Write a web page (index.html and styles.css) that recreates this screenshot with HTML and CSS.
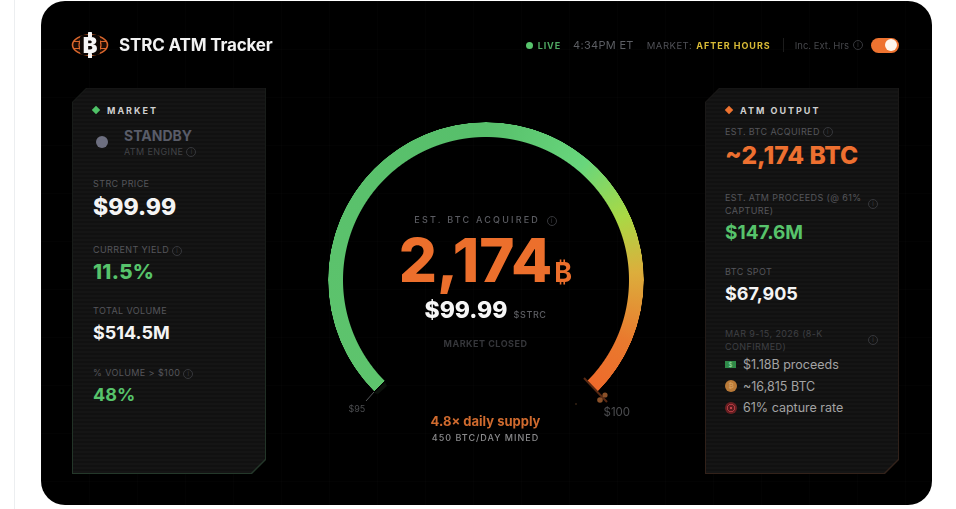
FILE: index.html
```html
<!DOCTYPE html>
<html lang="en">
<head>
    <meta charset="UTF-8">
    <title>STRC ATM Tracker</title>
    <link rel="stylesheet" href="styles.css">
</head>
<body>
    <div class="page">
        <div class="card">
            <header class="topbar">
                <div class="brand">
                    <svg class="logo" width="38" height="26" viewBox="0 0 38 26">
                        <ellipse cx="19" cy="13" rx="17.5" ry="10" fill="#1e0c05" stroke="#d9662c" stroke-width="1.6"/>
                        <ellipse cx="19" cy="13" rx="11" ry="10" fill="none" stroke="#d9662c" stroke-width="1.2"/>
                        <path d="M2 9.5H36M2 16.5H36" stroke="#d9662c" stroke-width="1.1"/>
                        <rect x="9" y="3" width="20" height="20" rx="3" fill="#0c0603"/>
                        <rect x="17" y="0" width="4" height="5" rx="0.6" fill="#f4f4f4"/>
                        <rect x="17" y="21" width="4" height="5" rx="0.6" fill="#f4f4f4"/>
                        <text x="19" y="21" text-anchor="middle" class="logo-b">B</text>
                    </svg>
                    <span class="title">STRC ATM Tracker</span>
                </div>
                <div class="status">
                    <span class="live-dot"></span>
                    <span class="live">LIVE</span>
                    <span class="clock">4:34PM ET</span>
                    <span class="market">MARKET:</span>
                    <span class="session">AFTER HOURS</span>
                    <span class="divider"></span>
                    <span class="ext">Inc. Ext. Hrs</span>
                    <span class="info info-ext">i</span>
                    <span class="toggle"><span class="knob"></span></span>
                </div>
            </header>

            <main class="board">
                <section class="panel panel-green">
                    <div class="panel-inner">
                        <h3 class="panel-head"><span class="diamond diamond-green"></span>MARKET</h3>
                        <div class="engine">
                            <span class="engine-dot"></span>
                            <div>
                                <div class="engine-state">STANDBY</div>
                                <div class="label label-engine">ATM ENGINE <span class="info">i</span></div>
                            </div>
                        </div>
                        <div class="stat stat-price">
                            <div class="label">STRC PRICE</div>
                            <div class="value value-lg">$99.99</div>
                        </div>
                        <div class="stat">
                            <div class="label">CURRENT YIELD <span class="info">i</span></div>
                            <div class="value value-md green">11.5%</div>
                        </div>
                        <div class="stat">
                            <div class="label">TOTAL VOLUME</div>
                            <div class="value">$514.5M</div>
                        </div>
                        <div class="stat stat-last">
                            <div class="label">% VOLUME &gt; $100 <span class="info">i</span></div>
                            <div class="value green">48%</div>
                        </div>
                    </div>
                </section>

                <section class="center">
                    <div class="gauge">
                        <div class="ring"></div>
                        <svg class="ticks" width="316" height="316" viewBox="0 0 316 316">
                            <path d="M46 270 L38 279" stroke="#55585a" stroke-width="1"/>
                            <path d="M57 260 L59 264 L50 272 L46 271 Z" fill="#0c110c"/>
                            <path d="M256 256 L279 280" stroke="#5a2a14" stroke-width="2"/>
                            <circle cx="277" cy="273" r="2.6" fill="#8a5028"/>
                            <circle cx="272" cy="278" r="2.8" fill="#8a5028"/>
                            <circle cx="248" cy="282" r="0.8" fill="#5a3a20"/>
                        </svg>
                        <span class="end-label end-low">$95</span>
                        <span class="end-label end-high">$100</span>
                        <div class="readout">
                            <div class="readout-label">EST. BTC ACQUIRED <span class="info">i</span></div>
                            <div class="readout-value">2,174<span class="btc">₿</span></div>
                            <div class="readout-price">$99.99 <span class="ticker">$STRC</span></div>
                            <div class="readout-state">MARKET CLOSED</div>
                        </div>
                    </div>
                    <div class="supply">4.8× daily supply</div>
                    <div class="mined">450 BTC/DAY MINED</div>
                </section>

                <section class="panel panel-orange">
                    <div class="panel-inner panel-inner-right">
                        <h3 class="panel-head"><span class="diamond diamond-orange"></span>ATM OUTPUT</h3>
                        <div class="stat stat-first">
                            <div class="label">EST. BTC ACQUIRED <span class="info">i</span></div>
                            <div class="value value-lg value-wide orange">~2,174 BTC</div>
                        </div>
                        <div class="stat">
                            <div class="label label-row"><span>EST. ATM PROCEEDS (@ 61% CAPTURE)</span><span class="info">i</span></div>
                            <div class="value value-green-lg green">$147.6M</div>
                        </div>
                        <div class="stat">
                            <div class="label">BTC SPOT</div>
                            <div class="value">$67,905</div>
                        </div>
                        <div class="stat stat-last">
                            <div class="label label-row label-dim"><span>MAR 9-15, 2026 (8-K CONFIRMED)</span><span class="info">i</span></div>
                            <ul class="facts">
                                <li><span class="bill">$</span>$1.18B proceeds</li>
                                <li><span class="coin">₿</span>~16,815 BTC</li>
                                <li><span class="target"></span>61% capture rate</li>
                            </ul>
                        </div>
                    </div>
                </section>
            </main>
        </div>
    </div>
</body>
</html>
```

FILE: styles.css
```css
* {
    box-sizing: border-box;
}
html, body {
    margin: 0;
    height: 100%;
    overflow: hidden;
    background: #fff;
}
body {
    font-family: Inter, "Liberation Sans", sans-serif;
}
.page {
    height: 509px;
    margin-left: 14px;
    padding: 1px 0 0 26px;
    border-left: 1px solid #eceef0;
}
.card {
    width: 891px;
    height: 504px;
    padding: 32px 33px 31px 31px;
    border-radius: 24px;
    background-color: #000;
    background-image:
        linear-gradient(rgba(255,255,255,0.012) 1px, transparent 1px),
        linear-gradient(90deg, rgba(255,255,255,0.012) 1px, transparent 1px);
    background-size: 48px 48px;
    filter: blur(0.5px);
}

/* header */
.topbar {
    display: flex;
    align-items: center;
    justify-content: space-between;
    height: 24px;
}
.brand {
    display: flex;
    align-items: center;
    gap: 10px;
}
.logo {
    margin-left: -1px;
}
.logo-b {
    font: 900 22px Inter, sans-serif;
    fill: #f6f6f6;
}
.title {
    color: #f2f2f2;
    font-size: 17px;
    font-weight: 700;
    letter-spacing: -0.16px;
}
.status {
    display: flex;
    align-items: center;
    font-size: 9.5px;
}
.live-dot {
    width: 7px;
    height: 7px;
    margin-right: 5px;
    border-radius: 50%;
    background: #58c56d;
}
.live {
    margin-right: 12px;
    color: #4fa862;
    font-size: 9px;
    font-weight: 700;
    letter-spacing: 0.9px;
}
.clock {
    margin-right: 13px;
    color: #5c5e63;
    font-size: 11px;
    letter-spacing: 0.3px;
}
.market {
    margin-right: 4px;
    color: #505157;
    letter-spacing: 0.5px;
}
.session {
    margin-right: 12px;
    color: #d9bb36;
    font-size: 9px;
    font-weight: 700;
    letter-spacing: 1px;
}
.divider {
    width: 1px;
    height: 14px;
    margin-right: 11px;
    background: #1c1c1c;
}
.ext {
    color: #46474b;
    letter-spacing: 0;
}
.info-ext {
    margin: 0 8px 0 4px;
}
.toggle {
    display: flex;
    justify-content: flex-end;
    align-items: center;
    width: 28px;
    height: 15px;
    padding-right: 2px;
    border-radius: 8px;
    background: #ee7330;
}
.knob {
    width: 12px;
    height: 12px;
    border-radius: 50%;
    background: #fdf6ee;
}
.info {
    display: inline-flex;
    align-items: center;
    justify-content: center;
    width: 10px;
    height: 10px;
    border: 1px solid #36373b;
    border-radius: 50%;
    color: #3c3d41;
    font-size: 6px;
    font-weight: 400;
    letter-spacing: 0;
    line-height: 1;
    vertical-align: middle;
}

/* layout */
.board {
    display: grid;
    grid-template-columns: 194px 1fr 194px;
    height: 386px;
    margin-top: 31px;
}

/* side panels */
.panel {
    padding: 0 1px 1px;
    clip-path: polygon(14px 0, 100% 0, 100% calc(100% - 14px), calc(100% - 14px) 100%, 0 100%, 0 14px);
}
.panel-green {
    background: linear-gradient(0deg, #24382a, #181c19 60%);
}
.panel-orange {
    background: linear-gradient(0deg, #33221a, #1a1817 60%);
}
.panel-inner {
    height: 100%;
    padding: 16px 20px 0 20px;
    background: repeating-linear-gradient(0deg, #151515 0, #151515 2px, #111111 2px, #111111 4px);
    clip-path: polygon(14px 0, 100% 0, 100% calc(100% - 14px), calc(100% - 14px) 100%, 0 100%, 0 14px);
}
.panel-inner-right {
    padding-left: 19px;
}
.panel-head {
    display: flex;
    align-items: center;
    height: 12px;
    margin: 0;
    color: #cfcfcf;
    font-size: 9px;
    font-weight: 700;
    letter-spacing: 2px;
}
.diamond {
    width: 6px;
    height: 6px;
    margin-right: 8px;
    transform: rotate(45deg);
}
.diamond-green {
    background: #4fc267;
}
.diamond-orange {
    margin-left: 1px;
    background: #ee7330;
}
.engine {
    display: flex;
    align-items: center;
    gap: 16px;
    margin: 10.5px 0 0 3px;
}
.engine-dot {
    width: 12px;
    height: 12px;
    border-radius: 50%;
    background: #6d6f80;
}
.engine-state {
    color: #595c68;
    font-size: 14px;
    font-weight: 700;
    line-height: 17px;
}
.label {
    color: #55565b;
    font-size: 9px;
    letter-spacing: 0.4px;
    line-height: 13px;
}
.label-engine {
    margin-top: 1px;
    color: #424347;
}
.label-row {
    display: flex;
    justify-content: space-between;
    align-items: center;
}
.label-row span:first-child {
    width: 140px;
}
.label-dim {
    color: #3f4044;
}
.stat {
    margin-top: 21.5px;
}
.stat-price {
    margin-top: 19px;
}
.stat-first {
    margin-top: 8.5px;
}
.stat-last {
    margin-top: 22.5px;
}
.value {
    margin-top: 4.5px;
    color: #f4f4f4;
    font-size: 18px;
    font-weight: 700;
    line-height: 22px;
}
.value-md {
    font-size: 20.5px;
    font-weight: 800;
    letter-spacing: 0.3px;
}
.value-green-lg {
    font-size: 19px;
}
.value-lg {
    margin-top: 3px;
    font-size: 23px;
    font-weight: 800;
    line-height: 29px;
}
.value-wide {
    font-size: 24.5px;
}
.green {
    color: #57c36b;
}
.orange {
    color: #ee7030;
}
.facts {
    margin: 1px 0 0;
    padding: 0;
    list-style: none;
    color: #a3a3a3;
    font-size: 12.5px;
}
.facts li {
    display: flex;
    align-items: center;
    height: 21.5px;
}
.bill {
    display: flex;
    align-items: center;
    justify-content: center;
    width: 11px;
    height: 7px;
    margin-right: 7px;
    background: #2f8a48;
    color: #a6e0b2;
    font-size: 6px;
}
.coin {
    display: flex;
    align-items: center;
    justify-content: center;
    width: 12px;
    height: 12px;
    margin-right: 6px;
    border-radius: 50%;
    background: #b97a38;
    color: #d9a466;
    font-family: "DejaVu Sans", sans-serif;
    font-size: 7px;
}
.target {
    width: 12px;
    height: 12px;
    margin-right: 6px;
    border-radius: 50%;
    background: radial-gradient(circle, #c0444a 0 1.5px, #5a1a1e 1.5px 3px, #b03a40 3px 4px, #6a1f22 4px);
}

/* gauge */
.center {
    display: flex;
    flex-direction: column;
    align-items: center;
    padding-top: 34px;
}
.gauge {
    position: relative;
    width: 316px;
    height: 291px;
    padding-top: 92px;
}
.ring {
    position: absolute;
    top: 0;
    left: 0;
    width: 316px;
    height: 316px;
    border-radius: 50%;
    background: conic-gradient(from 225deg,
        #5ec46d 0,
        #57bf6b 135deg,
        #68d67c 175deg,
        #a9d945 200deg,
        #dcae3c 222deg,
        #e97a2e 248deg,
        #ee6a2b 270deg,
        transparent 270deg);
    -webkit-mask: radial-gradient(circle, transparent 142.5px, #000 143.5px, #000 157.5px, transparent 158px);
    mask: radial-gradient(circle, transparent 142.5px, #000 143.5px, #000 157.5px, transparent 158px);
}
.ticks {
    position: absolute;
    top: 0;
    left: 0;
}
.end-label {
    position: absolute;
    color: #4c4d50;
}
.end-low {
    top: 281px;
    left: 21px;
    font-size: 9px;
}
.end-high {
    top: 283px;
    left: 276px;
    font-size: 11.5px;
}
.readout {
    position: relative;
    text-align: center;
}
.readout-label {
    color: #5b5c62;
    font-size: 9px;
    font-weight: 500;
    letter-spacing: 2.2px;
    line-height: 12px;
}
.readout-label .info {
    margin-left: 2px;
}
.readout-value {
    height: 66px;
    margin-top: 1px;
    color: #ec6f2c;
    font-size: 60px;
    font-weight: 800;
    line-height: 66px;
    white-space: nowrap;
}
.btc {
    margin-left: 2px;
    font-size: 27px;
    font-weight: 700;
}
.readout-price {
    margin-top: 2px;
    color: #f6f6f6;
    font-size: 23px;
    font-weight: 800;
    line-height: 30px;
}
.ticker {
    margin-left: 1px;
    color: #5d5e63;
    font-size: 9px;
    font-weight: 500;
    letter-spacing: 0.6px;
}
.readout-state {
    margin-top: 8px;
    color: #35363a;
    font-size: 9px;
    font-weight: 700;
    letter-spacing: 0.5px;
}
.supply {
    color: #cf6a2e;
    font-size: 13px;
    font-weight: 700;
    line-height: 16px;
}
.mined {
    margin-top: 2px;
    color: #8a8a8c;
    font-size: 9px;
    font-weight: 500;
    letter-spacing: 1px;
    line-height: 14px;
}
```
